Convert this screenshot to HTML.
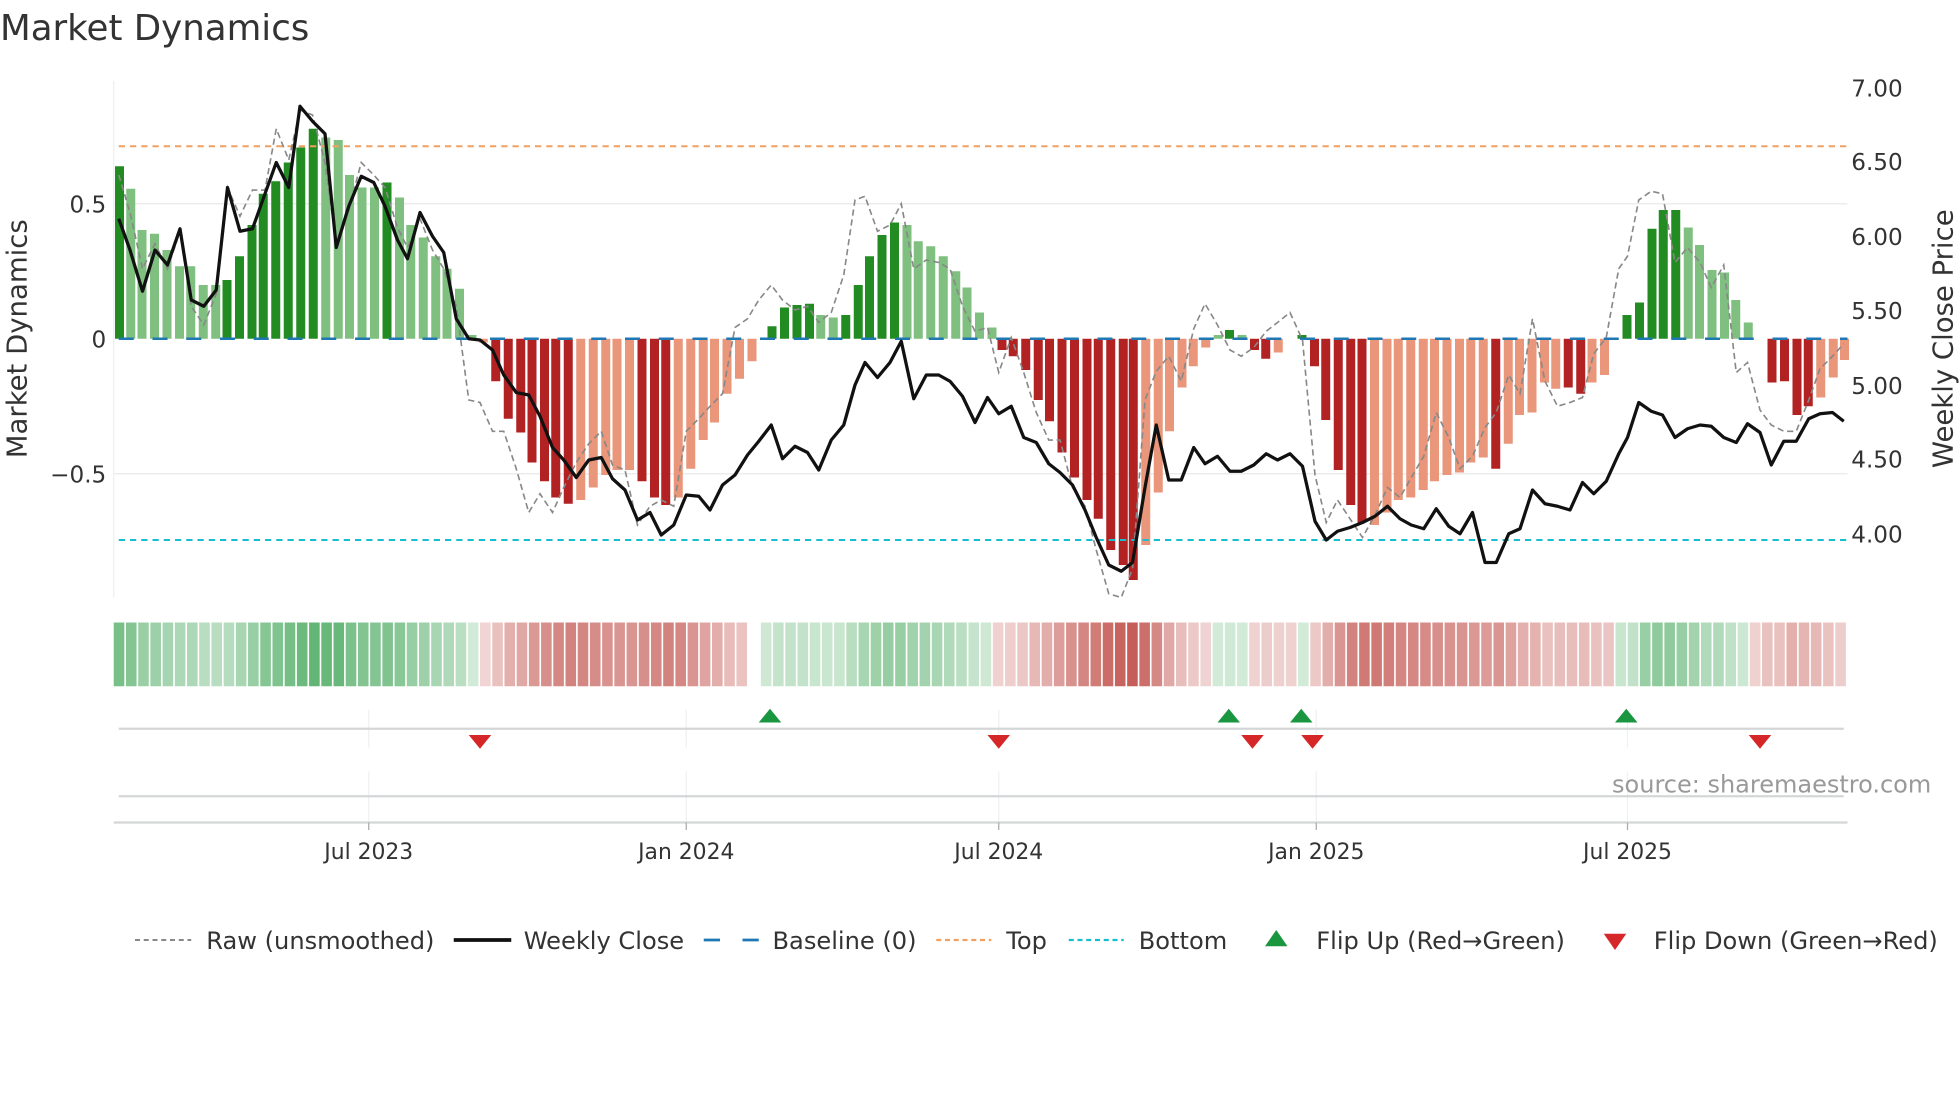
<!DOCTYPE html>
<html><head><meta charset="utf-8">
<style>
html,body{margin:0;padding:0;background:#fff;width:1960px;height:1102px;overflow:hidden}
svg{display:block;font-family:"DejaVu Sans","Liberation Sans",sans-serif}
</style></head>
<body>
<svg id="s" width="1960" height="1102" viewBox="0 0 1568 881.6" xmlns="http://www.w3.org/2000/svg">
<rect width="1568" height="882" fill="#fff"/>
<text x="0" y="32" font-size="28.5" fill="#333">Market Dynamics</text>
<line x1="91" y1="163" x2="1478" y2="163" stroke="#ececec" stroke-width="1.2"/>
<line x1="91" y1="379" x2="1478" y2="379" stroke="#ececec" stroke-width="1.2"/>
<line x1="91" y1="65" x2="91" y2="478" stroke="#eceff1" stroke-width="1"/>
<g id="bars"></g>
<line x1="95" y1="271" x2="1478" y2="271" stroke="#1f77b4" stroke-width="2" stroke-dasharray="12,15"/>
<line x1="95" y1="117" x2="1478" y2="117" stroke="#f0a060" stroke-width="1.6" stroke-dasharray="5,4"/>
<line x1="95" y1="432" x2="1478" y2="432" stroke="#17becf" stroke-width="1.6" stroke-dasharray="5,4"/>
<polyline id="raw" fill="none" stroke="#888" stroke-width="1.3" stroke-dasharray="5,3"/>
<polyline id="price" fill="none" stroke="#111" stroke-width="2.6" stroke-linejoin="round"/>
<g font-size="18.5" fill="#333">
<text x="85" y="170" text-anchor="end">0.5</text>
<text x="85" y="278" text-anchor="end">0</text>
<text x="85" y="386" text-anchor="end">−0.5</text>
<text x="1481" y="77">7.00</text>
<text x="1481" y="136">6.50</text>
<text x="1481" y="196">6.00</text>
<text x="1481" y="255">5.50</text>
<text x="1481" y="315">5.00</text>
<text x="1481" y="374">4.50</text>
<text x="1481" y="434">4.00</text>
</g>
<text transform="translate(21,271) rotate(-90)" text-anchor="middle" font-size="22" fill="#333">Market Dynamics</text>
<text transform="translate(1562,271) rotate(-90)" text-anchor="middle" font-size="22" fill="#333">Weekly Close Price</text>
<g id="heat"></g>
<g stroke="#eef0f2" stroke-width="1">
<line x1="295" y1="568" x2="295" y2="598"/><line x1="549" y1="568" x2="549" y2="598"/><line x1="799" y1="568" x2="799" y2="598"/><line x1="1053" y1="568" x2="1053" y2="598"/><line x1="1302" y1="568" x2="1302" y2="598"/>
<line x1="295" y1="617" x2="295" y2="658"/><line x1="549" y1="617" x2="549" y2="658"/><line x1="799" y1="617" x2="799" y2="658"/><line x1="1053" y1="617" x2="1053" y2="658"/><line x1="1302" y1="617" x2="1302" y2="658"/>
</g>
<line x1="95" y1="583" x2="1475" y2="583" stroke="#d4d6d8" stroke-width="1.8"/>
<line x1="95" y1="637" x2="1475" y2="637" stroke="#d4d6d8" stroke-width="1.8"/>
<line x1="91" y1="658" x2="1478" y2="658" stroke="#d4d6d8" stroke-width="1.8"/>
<g id="marks"></g>
<g stroke="#aaa" stroke-width="1"><line x1="295" y1="658" x2="295" y2="664"/><line x1="549" y1="658" x2="549" y2="664"/><line x1="799" y1="658" x2="799" y2="664"/><line x1="1053" y1="658" x2="1053" y2="664"/><line x1="1302" y1="658" x2="1302" y2="664"/></g>
<g font-size="17.5" fill="#333" text-anchor="middle">
<text x="295" y="687">Jul 2023</text><text x="549" y="687">Jan 2024</text><text x="799" y="687">Jul 2024</text><text x="1053" y="687">Jan 2025</text><text x="1302" y="687">Jul 2025</text>
</g>
<text x="1545" y="634" text-anchor="end" font-size="19.2" fill="#999">source: sharemaestro.com</text>
<g font-size="19.3" fill="#333">
<line x1="108" y1="752" x2="153" y2="752" stroke="#888" stroke-width="1.6" stroke-dasharray="4,3"/>
<text x="165" y="759">Raw (unsmoothed)</text>
<line x1="363" y1="752" x2="409" y2="752" stroke="#111" stroke-width="3"/>
<text x="419" y="759">Weekly Close</text>
<line x1="563" y1="752" x2="607" y2="752" stroke="#1f77b4" stroke-width="2.2" stroke-dasharray="13,18"/>
<text x="618" y="759">Baseline (0)</text>
<line x1="749" y1="752" x2="793" y2="752" stroke="#f0a060" stroke-width="1.8" stroke-dasharray="4,3"/>
<text x="805" y="759">Top</text>
<line x1="855" y1="752" x2="899" y2="752" stroke="#17becf" stroke-width="1.8" stroke-dasharray="4,3"/>
<text x="911" y="759">Bottom</text>
<polygon points="1021,744 1012,757 1030,757" fill="#1a9641"/>
<text x="1053" y="759">Flip Up (Red→Green)</text>
<polygon points="1283,747 1301,747 1292,760" fill="#d62728"/>
<text x="1323" y="759">Flip Down (Green→Red)</text>
</g>
</svg>
<script>
var NS="http://www.w3.org/2000/svg";
function el(p,t,a){var e=document.createElementNS(NS,t);for(var k in a)e.setAttribute(k,a[k]);p.appendChild(e);return e;}
var B=[[92,133,1],[101,151,0],[110,184,0],[120,187,0],[130,200,0],[140,213,0],[149,213,0],[159,228,0],[169,228,0],[178,224,1],[188,205,1],[198,180,1],[207,155,1],[217,145,1],[227,130,1],[237,118,1],[247,103,1],[257,110,0],[267,112,0],[276,140,0],[286,150,0],[296,150,0],[306,146,1],[316,158,0],[325,180,0],[335,190,0],[345,205,0],[354,215,0],[364,231,0],[374,268,0],
[383,274,0],[393,305,1],[403,335,1],[413,346,1],[422,370,1],[432,385,1],[441,398,1],[451,403,1],[461,400,0],[471,390,0],[481,380,0],[490,376,0],[500,376,0],[510,385,1],[520,398,1],[529,404,1],[539,398,0],[549,375,0],[559,352,0],[568,338,0],[578,315,0],[588,303,0],[598,289,0],
[614,261,1],[624,246,1],[634,244,1],[644,243,1],[653,252,0],[663,254,0],[673,252,1],[683,228,1],[692,205,1],[702,188,1],[712,178,1],[722,180,0],[731,193,0],[741,197,0],[751,205,0],[761,217,0],[770,230,0],[780,250,0],[790,262,0],
[798,280,1],[807,285,1],[817,296,1],[827,320,1],[836,337,1],[846,362,1],[856,382,1],[866,400,1],[875,415,1],[885,440,1],[895,452,1],[903,464,1],[913,436,0],[923,394,0],[932,345,0],[942,310,0],[951,293,0],[961,278,0],[971,268,0],[980,264,1],[990,268,0],[1000,280,1],[1009,287,1],[1019,282,0],[1038,268,1],
[1048,293,1],[1057,336,1],[1067,376,1],[1077,404,1],[1086,418,1],[1096,420,0],[1106,410,0],[1115,400,0],[1125,398,0],[1135,392,0],[1144,385,0],[1154,380,0],[1164,378,0],[1173,370,0],[1183,366,0],[1193,375,1],[1203,355,0],[1212,332,0],[1222,330,0],[1232,306,0],[1241,311,0],[1251,310,1],[1261,315,1],[1270,306,0],[1280,300,0],
[1298,252,1],[1308,242,1],[1318,183,1],[1327,168,1],[1337,168,1],[1347,182,0],[1356,196,0],[1366,216,0],[1376,218,0],[1385,240,0],[1395,258,0],
[1414,306,1],[1424,305,1],[1434,332,1],[1443,325,1],[1453,318,0],[1463,302,0],[1472,288,0]];
var g=document.getElementById("bars"),h=document.getElementById("heat");
B.forEach(function(b){var pos=b[1]<271;var col=pos?(b[2]?"#228b22":"#7fbf7f"):(b[2]?"#b22222":"#e9967a");
 var y=Math.min(b[1],271),hh=Math.abs(b[1]-271);el(g,"rect",{x:b[0],y:y,width:7.2,height:Math.max(hh,1.5),fill:col});});
// continuous heatmap stripes
var N=142,W=(1478-91)/N;
for(var i=0;i<N;i++){var x0=91+i*W,c=x0+W/2;if(c>602&&c<612)continue;
 var best=null,bd=1e9;B.forEach(function(b){var d=Math.abs(b[0]+3.6-c);if(d<bd){bd=d;best=b;}});
 var pos,v;
 if(bd>6){
   pos=(c>1285&&c<1300);v=0.05;
   if(c>1025&&c<1036)pos=false;
   if(c>1400&&c<1412)pos=false;
 } else {pos=best[1]<271;v=Math.abs(271-best[1])/200;}
 var op=0.22+0.7*Math.min(v,1);
 el(h,"rect",{x:x0,y:498,width:W-1.3,height:51,fill:pos?"#3ea455":"#bf4a44","fill-opacity":op});}
function pts(a){return a.map(function(p){return p.join(",")}).join(" ");}
var P=[[95,175],[104,200],[114,233],[124,200],[134,212],[144,183],[153,240],[163,245],[173,232],[182,150],[192,185],[202,183],[212,155],[221,130],[231,150],[240,85],[250,97],[260,107],[269,198],[279,165],[289,141],[299,146],[308,165],[318,192],[326,207],[336,170],[346,189],[355,202],[365,255],[375,271],[384,272],[394,280],[403,300],[413,314],[423,316],[432,333],[442,358],[451,368],[461,382],[471,368],[481,366],[490,383],[500,392],[510,416],[520,410],[529,428],[539,420],[549,396],[559,397],[568,408],[578,388],[588,380],[598,364],[607,353],[617,340],[626,367],[636,357],[646,362],[655,376],[665,352],[675,340],[684,308],[692,290],[702,302],[712,290],[721,273],[731,319],[741,300],[751,300],[760,305],[770,317],[780,338],[790,318],[799,331],[809,325],[819,350],[829,354],[839,371],[848,378],[858,388],[868,408],[877,430],[887,452],[897,457],[906,450],[916,390],[925,340],[935,384],[945,384],[955,358],[964,371],[974,365],[984,377],[993,377],[1003,372],[1013,363],[1022,368],[1032,363],[1042,373],[1052,417],[1061,432],[1070,425],[1080,422],[1090,418],[1100,413],[1110,405],[1120,415],[1129,420],[1139,423],[1149,407],[1159,421],[1168,427],[1178,410],[1188,450],[1197,450],[1207,427],[1216,423],[1226,392],[1236,403],[1246,405],[1256,408],[1266,386],[1275,395],[1285,385],[1295,363],[1302,350],[1311,322],[1321,329],[1330,332],[1340,350],[1350,343],[1360,340],[1369,341],[1379,350],[1389,354],[1398,339],[1408,346],[1417,372],[1427,353],[1437,353],[1447,335],[1456,331],[1466,330],[1475,337]];
var R=[[95,140],[104,170],[114,215],[124,195],[134,215],[144,185],[153,245],[163,260],[173,235],[182,150],[192,173],[202,152],[212,152],[221,103],[231,128],[240,88],[250,92],[260,130],[269,195],[279,168],[289,130],[299,140],[308,150],[318,182],[326,198],[336,175],[346,200],[355,215],[365,245],[375,320],[384,322],[394,345],[403,345],[413,375],[423,410],[432,395],[442,410],[451,390],[461,370],[471,355],[481,345],[490,372],[500,376],[510,420],[520,405],[529,400],[539,405],[549,345],[559,335],[568,325],[578,315],[588,262],[598,255],[607,240],[617,228],[626,240],[636,248],[646,245],[655,258],[665,250],[675,220],[684,160],[692,157],[702,185],[712,180],[721,163],[731,215],[741,208],[751,210],[760,215],[770,245],[780,265],[790,262],[799,298],[809,270],[819,298],[829,330],[839,352],[848,352],[858,390],[868,405],[877,440],[887,475],[897,478],[906,455],[916,320],[925,297],[935,285],[945,305],[955,263],[964,243],[974,260],[984,280],[993,285],[1003,278],[1013,265],[1022,258],[1032,250],[1042,272],[1052,380],[1061,418],[1070,400],[1080,415],[1090,430],[1100,412],[1110,390],[1120,398],[1129,382],[1139,365],[1149,330],[1159,350],[1168,375],[1178,365],[1188,342],[1197,330],[1207,300],[1216,315],[1226,255],[1236,305],[1246,325],[1256,322],[1266,318],[1275,283],[1285,270],[1295,215],[1302,205],[1311,160],[1321,153],[1330,155],[1340,210],[1350,198],[1360,210],[1369,230],[1379,212],[1389,298],[1398,290],[1408,328],[1417,340],[1427,345],[1437,345],[1447,320],[1456,295],[1466,285],[1475,275]];
document.getElementById("price").setAttribute("points",pts(P));
document.getElementById("raw").setAttribute("points",pts(R));
var m=document.getElementById("marks");
[616,983,1041,1301].forEach(function(x){el(m,"polygon",{points:(x)+",567 "+(x-9)+",578 "+(x+9)+",578",fill:"#1a9641"});});
[384,799,1002,1050,1408].forEach(function(x){el(m,"polygon",{points:(x-9)+",588 "+(x+9)+",588 "+x+",599",fill:"#d62728"});});
</script>
</body></html>
